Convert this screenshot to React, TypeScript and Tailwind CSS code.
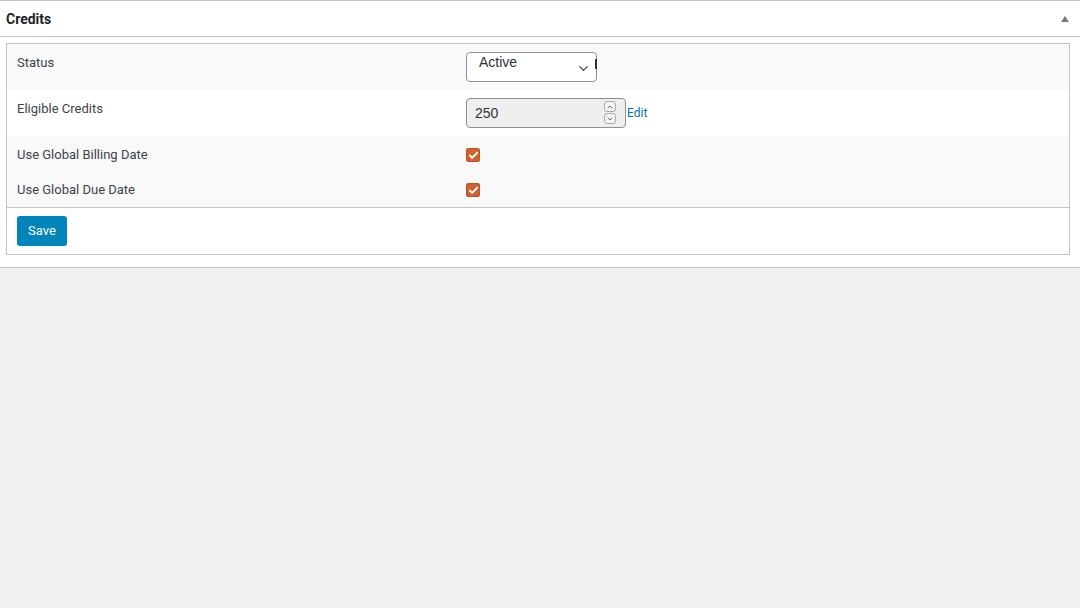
import { ChevronDown, ChevronUp, Check } from 'lucide-react';

const roboto = { fontFamily: 'Roboto, "Liberation Sans", sans-serif' };

function Checkbox() {
  return (
    <div className="w-[14px] h-[14px] rounded-[3px] bg-[#d0602e] flex items-center justify-center shadow-[inset_0_0_0_1px_#b9542a]">
      <Check size={11} strokeWidth={4} className="text-white" />
    </div>
  );
}

export default function App() {
  return (
    <div className="w-[1080px] h-[608px] bg-[#f0f0f1] text-[#3c434a]" style={roboto}>
      <div className="bg-white border-y border-[#c3c4c7]">
        {/* header */}
        <div className="h-[36px] flex items-center justify-between pl-[6px] pr-[11px] border-b border-[#c3c4c7]">
          <h2 className="text-[14px] font-bold text-[#1d2327] leading-none">Credits</h2>
          <div className="w-0 h-0 border-x-[4px] border-x-transparent border-b-[6px] border-b-[#787c82]" />
        </div>

        <div className="pl-[6px] pr-[10px] pt-[6px] pb-[12px]">
          <div className="border border-[#c3c4c7]">
            <div className="grid grid-cols-[459px_1fr] h-[46px] bg-[#f9f9f9]">
              <div className="pl-[10px] pt-[9px] text-[13px] leading-[20px]">Status</div>
              <div className="pt-[8px]">
                <div
                  className="relative w-[131px] h-[30px] bg-white border border-[#8c8f94] rounded-[4px] pl-[12px] text-[14px] text-[#2c3338] leading-[18px]"
                  style={{ fontFamily: '"Liberation Sans", Arial, sans-serif' }}
                >
                  Active
                  <ChevronDown size={15} strokeWidth={2} className="absolute right-[5px] top-[8px] text-[#3c434a]" />
                  <div className="absolute right-[-1px] top-[6px] w-[2px] h-[10px] bg-[#2c3338]" />
                </div>
              </div>
            </div>

            <div className="grid grid-cols-[459px_1fr] h-[46px] bg-white">
              <div className="pl-[10px] pt-[9px] text-[13px] leading-[20px]">Eligible Credits</div>
              <div className="pt-[8px] flex items-start">
                <div
                  className="relative w-[160px] h-[30px] bg-[#efefef] border border-[#8c8f94] rounded-[4px] pl-[8px] flex items-center text-[14px] text-[#2c3338]"
                  style={{ fontFamily: '"Liberation Sans", Arial, sans-serif' }}
                >
                  250
                  <div className="absolute right-[9px] top-[2px] flex flex-col gap-[1px]">
                    <div className="w-[12px] h-[11px] border border-[#aaa] rounded-[3px] bg-[#f4f4f4] flex items-center justify-center">
                      <ChevronUp size={8} strokeWidth={2.5} className="text-[#555]" />
                    </div>
                    <div className="w-[12px] h-[11px] border border-[#aaa] rounded-[3px] bg-[#f4f4f4] flex items-center justify-center">
                      <ChevronDown size={8} strokeWidth={2.5} className="text-[#555]" />
                    </div>
                  </div>
                </div>
                <a className="text-[12px] text-[#0073aa] leading-[30px] ml-[1px]">Edit</a>
              </div>
            </div>

            <div className="grid grid-cols-[459px_1fr] h-[36px] bg-[#f9f9f9]">
              <div className="pl-[10px] pt-[9px] text-[13px] leading-[20px]">Use Global Billing Date</div>
              <div className="pt-[12px]">
                <Checkbox />
              </div>
            </div>

            <div className="grid grid-cols-[459px_1fr] h-[36px] bg-[#f9f9f9] border-b border-[#c3c4c7]">
              <div className="pl-[10px] pt-[8px] text-[13px] leading-[20px]">Use Global Due Date</div>
              <div className="pt-[11px]">
                <Checkbox />
              </div>
            </div>

            <div className="h-[46px] pl-[10px] pt-[8px]">
              <button className="w-[50px] h-[30px] bg-[#0085ba] rounded-[3px] text-white text-[13px]">
                Save
              </button>
            </div>
          </div>
        </div>
      </div>
    </div>
  );
}
